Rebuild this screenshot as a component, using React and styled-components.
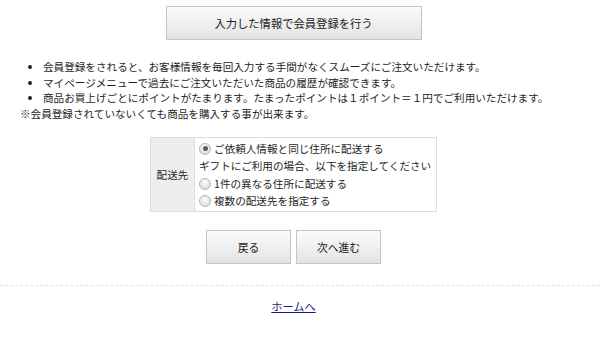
import React from 'react';
import styled, { createGlobalStyle } from 'styled-components';

const GlobalStyle = createGlobalStyle`
  body {
    margin: 0;
    background: #fff;
    color: #1e1e1e;
    font-family: "Noto Sans CJK JP", "Noto Sans", sans-serif;
    font-size: 10.6px;
  }
`;

const Wrapper = styled.div`
  width: 587px;
  padding-top: 6px;
`;

const GreyButton = styled.button`
  display: block;
  box-sizing: border-box;
  width: ${props => props.$wide ? '256px' : '85px'};
  height: 34px;
  padding: 0;
  border: 1px solid #c4c4c4;
  background: linear-gradient(#fbfbfb, #e4e4e4);
  color: #222;
  font-family: inherit;
  font-size: ${props => props.$wide ? '11.3px' : '10.8px'};
  cursor: pointer;
`;

const TopButton = styled(GreyButton)`
  margin: 0 auto;
`;

const Notes = styled.div`
  margin-top: 19px;
  padding-left: 20px;
  line-height: 15.7px;
`;

const BulletList = styled.ul`
  margin: 0;
  padding: 0 0 0 23px;
  list-style: disc;
`;

const Table = styled.table`
  margin: 15px auto 0;
  width: 287px;
  border-collapse: collapse;
`;

const HeadCell = styled.th`
  width: 43px;
  padding: 0;
  background: #eeeeee;
  border: 1px solid #dddddd;
  font-weight: normal;
  text-align: center;
`;

const BodyCell = styled.td`
  padding: 2px 4px 1px 4px;
  border: 1px solid #dddddd;
  line-height: 17.5px;
  white-space: nowrap;
`;

const Option = styled.label`
  display: flex;
  align-items: center;
  gap: 2px;
`;

const Radio = styled.input.attrs({ type: 'radio' })`
  appearance: none;
  box-sizing: border-box;
  width: 12px;
  height: 12px;
  margin: 0 1px 0 0;
  border: 1px solid #b5b5b5;
  border-radius: 50%;
  background: radial-gradient(circle at 50% 35%, #fdfdfd, #d6d6d6);
  display: inline-grid;
  place-content: center;

  &:checked::before {
    content: '';
    width: 5px;
    height: 5px;
    border-radius: 50%;
    background: #5a5a5a;
  }
`;

const ButtonRow = styled.div`
  display: flex;
  justify-content: center;
  gap: 5px;
  margin-top: 18px;
`;

const Footer = styled.div`
  margin-top: 21px;
  width: 600px;
  border-top: 1px dashed #e2e2e2;
  padding-top: 12px;
`;

const FooterInner = styled.div`
  width: 587px;
  text-align: center;
`;

const HomeLink = styled.a`
  color: #1d1d80;
  font-size: 11.2px;
  text-decoration: underline;
`;

export default function App() {
  return (
    <>
      <GlobalStyle />
      <Wrapper>
        <TopButton $wide>入力した情報で会員登録を行う</TopButton>
        <Notes>
          <BulletList>
            <li>会員登録をされると、お客様情報を毎回入力する手間がなくスムーズにご注文いただけます。</li>
            <li>マイページメニューで過去にご注文いただいた商品の履歴が確認できます。</li>
            <li>商品お買上げごとにポイントがたまります。たまったポイントは１ポイント＝１円でご利用いただけます。</li>
          </BulletList>
          ※会員登録されていないくても商品を購入する事が出来ます。
        </Notes>
        <Table>
          <tbody>
            <tr>
              <HeadCell>配送先</HeadCell>
              <BodyCell>
                <Option><Radio name="ship" defaultChecked />ご依頼人情報と同じ住所に配送する</Option>
                <div>ギフトにご利用の場合、以下を指定してください</div>
                <Option><Radio name="ship" />1件の異なる住所に配送する</Option>
                <Option><Radio name="ship" />複数の配送先を指定する</Option>
              </BodyCell>
            </tr>
          </tbody>
        </Table>
        <ButtonRow>
          <GreyButton>戻る</GreyButton>
          <GreyButton>次へ進む</GreyButton>
        </ButtonRow>
      </Wrapper>
      <Footer>
        <FooterInner>
          <HomeLink href="#">ホームへ</HomeLink>
        </FooterInner>
      </Footer>
    </>
  );
}
